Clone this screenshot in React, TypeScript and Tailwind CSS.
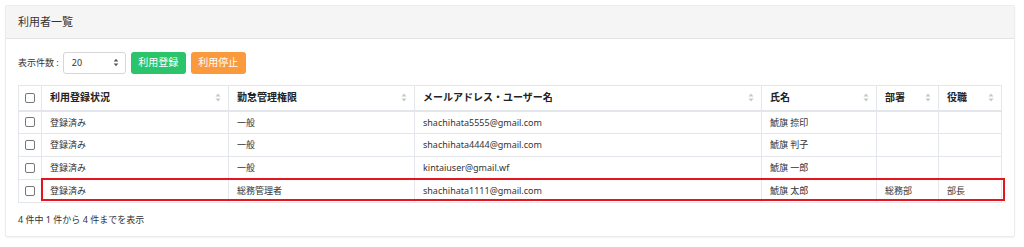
const columns = [
  { label: "利用登録状況", w: "w-[187px]" },
  { label: "勤怠管理権限", w: "w-[186px]" },
  { label: "メールアドレス・ユーザー名", w: "w-[347px]" },
  { label: "氏名", w: "w-[115px]" },
  { label: "部署", w: "w-[62px]" },
  { label: "役職", w: "w-[63px]" },
];

const users = [
  { status: "登録済み", role: "一般", email: "shachihata5555@gmail.com", name: "鯱旗 捺印", dept: "", title: "" },
  { status: "登録済み", role: "一般", email: "shachihata4444@gmail.com", name: "鯱旗 判子", dept: "", title: "" },
  { status: "登録済み", role: "一般", email: "kintaiuser@gmail.wf", name: "鯱旗 一郎", dept: "", title: "" },
  { status: "登録済み", role: "総務管理者", email: "shachihata1111@gmail.com", name: "鯱旗 太郎", dept: "総務部", title: "部長" },
];

function SortIcon() {
  return (
    <svg width="6" height="9" viewBox="0 0 6 9" className="text-[#c8c8c8] shrink-0">
      <path d="M3 0.5L5.5 3.5H0.5Z" fill="currentColor" />
      <path d="M3 8.5L5.5 5.5H0.5Z" fill="currentColor" />
    </svg>
  );
}

function Checkbox() {
  return <span className="block w-[10px] h-[10px] border border-[#767676] rounded-[2px] bg-white mx-auto" />;
}

export default function App() {
  return (
    <div className="bg-white w-[1024px] h-[247px] pt-[5px] font-['Noto_Sans','Noto_Sans_CJK_JP',sans-serif] text-[#333]">
      <div className="ml-[5px] w-[1010px] h-[232px] border border-[#ececec] rounded-[2px] shadow-[0_1px_2px_rgba(0,0,0,0.05)]">
        <div className="h-[33px] bg-[#f5f5f5] border-b border-[#e3e3e3] px-[12px] flex items-center text-[11px] text-[#333]">
          利用者一覧
        </div>

        <div className="px-[12px] pt-[12px]">
          <div className="flex items-center h-[23px]">
            <span className="text-[9px] text-[#333] whitespace-nowrap shrink-0 mr-[4px]">表示件数 :</span>
            <div className="w-[63px] h-[22px] border border-[#d6d6d6] rounded-[3px] flex items-center justify-between pl-[8px] pr-[6px] text-[9px]">
              <span>20</span>
              <svg width="6" height="9" viewBox="0 0 6 9" className="text-[#555]">
                <path d="M3 0.8L5.3 3.6H0.7Z" fill="currentColor" />
                <path d="M3 8.2L5.3 5.4H0.7Z" fill="currentColor" />
              </svg>
            </div>
            <button className="ml-[5px] w-[55px] h-[22px] rounded-[3px] bg-[#2bc46b] text-white text-[10px]">利用登録</button>
            <button className="ml-[5px] w-[55px] h-[22px] rounded-[3px] bg-[#fb9a3c] text-white text-[10px]">利用停止</button>
          </div>

          <div className="relative mt-[11px]">
            <table className="w-[984px] table-fixed border-collapse text-[9px]">
              <thead>
                <tr className="h-[25px]">
                  <th className="w-[23px] border border-[#e3e7ec] border-b-2">
                    <Checkbox />
                  </th>
                  {columns.map((c) => (
                    <th key={c.label} className={`${c.w} border border-[#e3e7ec] border-b-2 pl-[8px] pr-[7px] text-left font-bold text-[10px] text-[#222]`}>
                      <div className="flex items-center justify-between">
                        <span>{c.label}</span>
                        <SortIcon />
                      </div>
                    </th>
                  ))}
                </tr>
              </thead>
              <tbody>
                {users.map((u) => (
                  <tr key={u.email} className="h-[23px]">
                    <td className="border border-[#e3e7ec]">
                      <Checkbox />
                    </td>
                    <td className="border border-[#e3e7ec] px-[8px]">{u.status}</td>
                    <td className="border border-[#e3e7ec] px-[8px]">{u.role}</td>
                    <td className="border border-[#e3e7ec] px-[8px]">{u.email}</td>
                    <td className="border border-[#e3e7ec] px-[8px]">{u.name}</td>
                    <td className="border border-[#e3e7ec] px-[8px]">{u.dept}</td>
                    <td className="border border-[#e3e7ec] px-[8px]">{u.title}</td>
                  </tr>
                ))}
              </tbody>
            </table>
            {/* highlight annotation on the last row */}
            <div className="absolute left-[23px] top-[93px] w-[964px] h-[23px] border-2 border-[#e4151f] pointer-events-none" />
          </div>

          <p className="mt-[10px] text-[9px] text-[#333]">4 件中 1 件から 4 件までを表示</p>
        </div>
      </div>
    </div>
  );
}
